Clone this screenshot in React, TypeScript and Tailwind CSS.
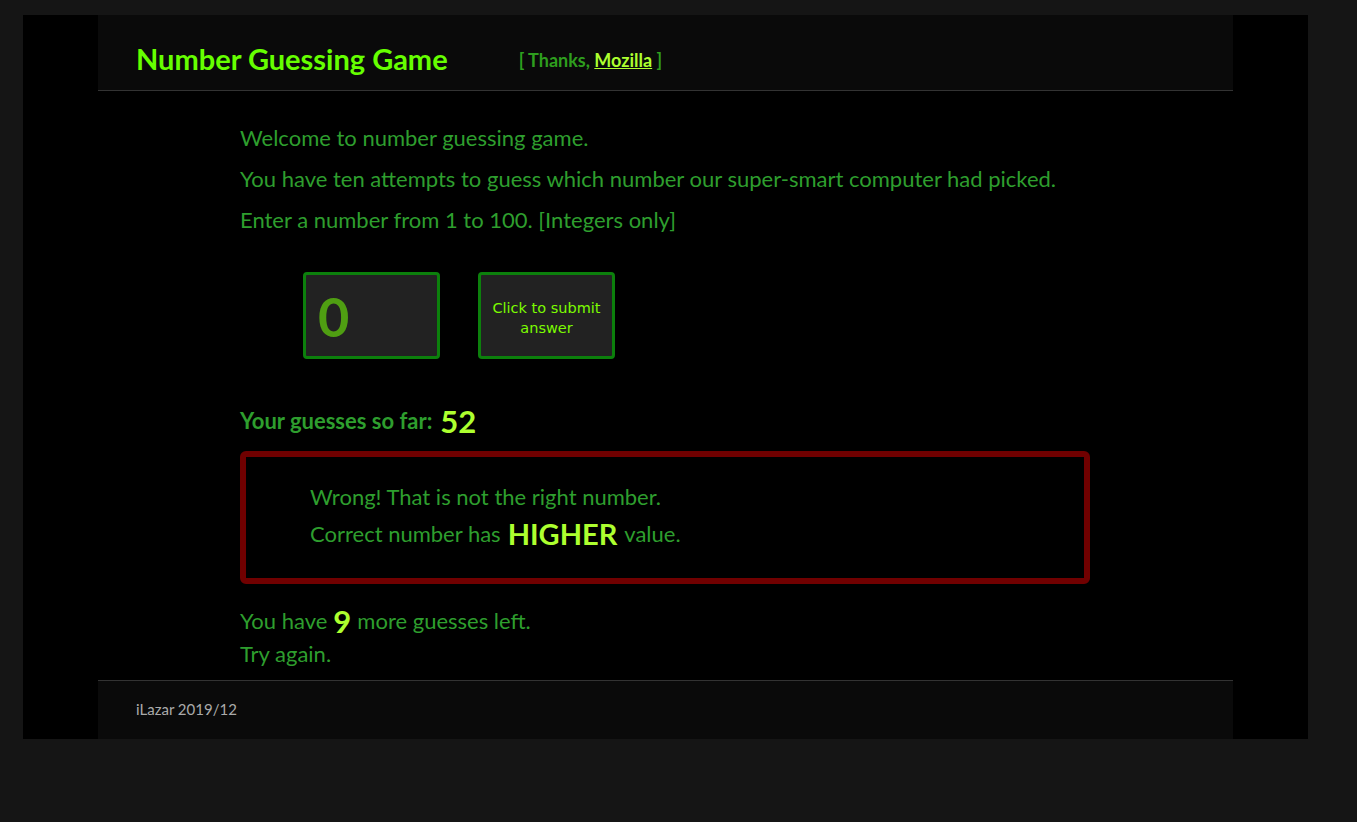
import React from "react";

const font = { fontFamily: '"Lato", "Open Sans", sans-serif' };

export default function App() {
  return (
    <div className="min-h-[822px] bg-[#151515] pt-[15px] pl-[23px]" style={font}>
      <div className="w-[1285px] bg-black pl-[75px]">
        <div className="w-[1135px]">
          {/* header */}
          <header className="h-[76px] bg-[#0a0a0a] border-b border-[#333] flex items-center pl-[38px]">
            <h1 className="text-[29px] font-bold text-[#66ff00] leading-none mt-[12px]">Number Guessing Game</h1>
            <span className="ml-[71px] mt-[16px] text-[18px] font-bold text-[#2e9e1e]">
              [ Thanks,{" "}
              <a href="#" className="text-[#adff2f] underline">Mozilla</a> ]
            </span>
          </header>

          {/* main */}
          <main className="pl-[142px] pt-[33px] pb-[12px] text-[22px] leading-[28px] text-[#2e9e2e]">
            <p>Welcome to number guessing game.</p>
            <p className="mt-[13px]">You have ten attempts to guess which number our super-smart computer had picked.</p>
            <p className="mt-[13px]">Enter a number from 1 to 100. [Integers only]</p>

            <div className="mt-[38px] ml-[63px] flex gap-[38px]">
              <div className="w-[137px] h-[87px] rounded-[4px] border-[3px] border-[#0c800c] bg-[#222] flex items-center pl-[12px]">
                <span className="text-[54px] font-bold text-[#4f9e12] leading-none mt-[2px]">0</span>
              </div>
              <button className="w-[137px] h-[87px] rounded-[4px] border-[3px] border-[#0c800c] bg-[#222] flex items-center justify-center text-center text-[14.5px] leading-[20px] text-[#7cfc00] pt-[4px]" style={{ fontFamily: '"DejaVu Sans", Verdana, sans-serif' }}>
                Click to submit
                <br />
                answer
              </button>
            </div>

            <div className="mt-[44px] h-[36px] flex items-center font-bold">
              <span className="text-[22px]">Your guesses so far:</span>
              <span className="ml-[8px] text-[31px] text-[#adff2f]">52</span>
            </div>

            <div className="mt-[12px] w-[850px] h-[133px] rounded-[6px] border-[6px] border-[#700000] pl-[64px] pt-[26px]">
              <p>Wrong! That is not the right number.</p>
              <p className="mt-[6px] h-[34px] flex items-center">
                Correct number has
                <span className="mx-[7px] text-[29px] font-bold text-[#adff2f]">HIGHER</span>
                value.
              </p>
            </div>

            <p className="mt-[23px] flex items-center h-[28px]">
              You have <span className="mx-[6px] text-[31px] font-bold text-[#adff2f]">9</span> more guesses left.
            </p>
            <p className="mt-[5px]">Try again.</p>
          </main>

          {/* footer */}
          <footer className="h-[59px] bg-[#0a0a0a] border-t border-[#333] flex items-center pl-[38px]">
            <span className="text-[15px] text-[#aaa] -mt-[2px]">iLazar 2019/12</span>
          </footer>
        </div>
      </div>
    </div>
  );
}
